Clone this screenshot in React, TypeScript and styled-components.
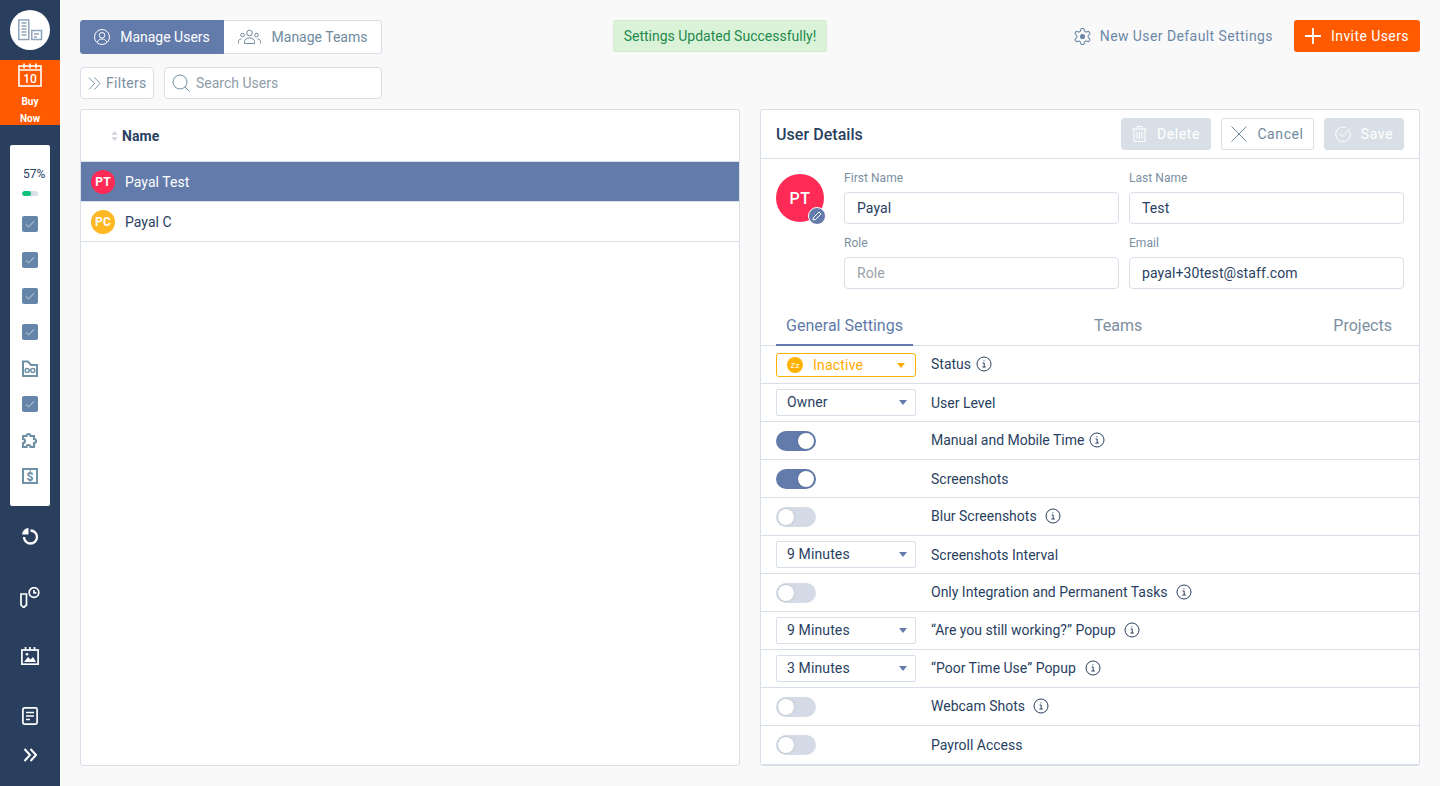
import React from "react";
import styled, { createGlobalStyle } from "styled-components";

const Global = createGlobalStyle`
  html, body { margin: 0; padding: 0; height: 100%; background: #f9f9fa; }
  * { box-sizing: border-box; }
  body { font-family: Roboto, "Liberation Sans", sans-serif; color: #2a3f5f; overflow: hidden; }
`;

const Page = styled.div`display: flex; width: 1440px; height: 786px; overflow: hidden;`;
const Sidebar = styled.aside`
  width: 60px; flex: none; height: 786px; background: #2a3f5e;
  display: flex; flex-direction: column; align-items: center; padding-top: 10px;
`;
const LogoCircle = styled.div`
  width: 40px; height: 40px; border-radius: 50%; background: #fff;
  display: flex; align-items: center; justify-content: center; flex: none;
`;
const BuyNow = styled.div`
  margin-top: 10px; width: 60px; height: 65px; background: #ff5a00; color: #fff; flex: none;
  display: flex; flex-direction: column; align-items: center; padding-top: 3px;
  font-size: 10px; font-weight: 700;
  span { display: block; line-height: 18px; height: 18px; margin-top: -1px; }
`;
const BuyIcon = styled.svg`width: 24px; height: 24px; margin-bottom: 7px; flex: none;`;
const ChecklistCard = styled.div`
  margin-top: 20px; width: 40px; height: 361px; background: #fff; border-radius: 2px; flex: none;
  display: flex; flex-direction: column; align-items: center; padding-top: 22px;
`;
const Percent = styled.div`
  font-size: 12px; line-height: 14px; color: #2a3f5f; width: 40px; padding-left: 13px; white-space: nowrap;
`;
const MiniBar = styled.div`
  margin-top: 10px; margin-bottom: 10px; width: 16px; height: 5px; border-radius: 3px; background: #d8dee8; overflow: hidden; flex: none;
`;
const MiniFill = styled.div`height: 100%; background: #0fc27a; border-radius: 3px;`;
const ChecklistSlot = styled.div`
  width: 16px; height: 36px; flex: none; display: flex; align-items: center; justify-content: center;
`;
const CheckBox = styled.div`
  width: 16px; height: 16px; border-radius: 2px; background: #6585a8;
  display: flex; align-items: center; justify-content: center;
`;
const SideIconSlot = styled.div<{ $top: number }>`
  margin-top: ${p => p.$top}px; width: 60px; flex: none; display: flex; justify-content: center;
`;

const Main = styled.main`flex: 1; min-width: 0; padding: 20px 20px 20px 20px; display: flex; flex-direction: column;`;
const TopRow = styled.div`display: flex; align-items: flex-start; height: 34px; position: relative;`;
const Segments = styled.div`display: flex; width: 302px; height: 34px; flex: none;`;
const Segment = styled.div<{ $active?: boolean; $w: number }>`
  width: ${p => p.$w}px; height: 34px; display: flex; align-items: center; justify-content: center; gap: ${p => (p.$active ? 10 : 11)}px;
  font-size: 14px;
  background: ${p => (p.$active ? "#627bab" : "#fff")};
  color: ${p => (p.$active ? "#fff" : "#6f8b9e")};
  border: 1px solid ${p => (p.$active ? "#627bab" : "#d9dfe9")};
  border-radius: ${p => (p.$active ? "3px 0 0 3px" : "0 3px 3px 0")};
  ${p => (p.$active ? "" : "border-left: none;")}
`;
const Toast = styled.div`
  margin-left: 231px; width: 214px; height: 32px; background: #daf3d8; border: 1px solid #cdeecb; border-radius: 3px;
  color: #1f8a4c; font-size: 14px; display: flex; align-items: center; justify-content: center;
`;
const TopRight = styled.div`margin-left: auto; display: flex; align-items: center; height: 32px;`;
const DefaultLink = styled.div`
  display: flex; align-items: center; gap: 9px; color: #6c88a6; font-size: 14px; letter-spacing: .42px; margin-right: 21px;
`;
const InviteBtn = styled.div`
  width: 126px; height: 32px; border-radius: 3px; background: #ff5a00; color: #fff; font-size: 14px; letter-spacing: .42px;
  display: flex; align-items: center; justify-content: center; gap: 10px;
`;
const FilterRow = styled.div`display: flex; gap: 10px; margin-top: 13px; height: 32px;`;
const FilterBtn = styled.div`
  width: 74px; height: 32px; background: #fff; border: 1px solid #d9dfe9; border-radius: 4px;
  display: flex; align-items: center; padding-left: 7px; gap: 5px; color: #7d919f; font-size: 14px; letter-spacing: .3px;
`;
const SearchBox = styled.div`
  width: 218px; height: 32px; background: #fff; border: 1px solid #d9dfe9; border-radius: 4px;
  display: flex; align-items: center; padding-left: 7px; gap: 6px; color: #909ca6; font-size: 14px;
`;
const Panels = styled.div`display: flex; gap: 20px; margin-top: 10px; height: 657px;`;
const ListPanel = styled.section`
  width: 660px; height: 657px; background: #fff; border: 1px solid #d9dfe9; border-radius: 3px; overflow: hidden;
`;
const ListHead = styled.div`
  height: 52px; display: flex; align-items: center; padding-left: 29px; gap: 3px; border-bottom: 1px solid #d9dfe9;
  font-size: 14px; font-weight: 700; color: #2a3f5f; letter-spacing: .1px;
`;
const UserRow = styled.div<{ $active?: boolean }>`
  height: 40px; display: flex; align-items: center; padding-left: 10px; gap: 10px; font-size: 14px; letter-spacing: .05px;
  background: ${p => (p.$active ? "#627bab" : "#fff")};
  color: ${p => (p.$active ? "#fff" : "#2a3f5f")};
  border-bottom: 1px solid #d9dfe9;
`;
const Avatar = styled.div<{ $bg: string }>`
  width: 24px; height: 24px; border-radius: 50%; background: ${p => p.$bg}; color: #fff;
  font-size: 12px; font-weight: 700; display: flex; align-items: center; justify-content: center; letter-spacing: .2px; flex: none;
`;
const DetailPanel = styled.section`
  width: 660px; height: 657px; background: #fff; border: 1px solid #d9dfe9; border-radius: 3px; overflow: hidden;
  display: flex; flex-direction: column;
`;
const DetailHead = styled.div`
  height: 49px; flex: none; display: flex; align-items: center; padding: 0 15px; border-bottom: 1px solid #d9dfe9;
`;
const DetailTitle = styled.div`font-size: 16px; font-weight: 500; color: #2a3f5f; margin-right: auto; letter-spacing: .05px;`;
const ActionBtn = styled.div<{ $w: number; $light?: boolean }>`
  width: ${p => p.$w}px; height: 32px; border-radius: 3px; margin-left: 10px;
  display: flex; align-items: center; justify-content: center; gap: 10px; font-size: 14px; letter-spacing: .6px;
  background: ${p => (p.$light ? "#fff" : "#d8dfe6")};
  border: 1px solid ${p => (p.$light ? "#d9dfe9" : "#d8dfe6")};
  color: ${p => (p.$light ? "#6f8b9e" : "#fff")};
`;
const FormArea = styled.div`display: flex; padding: 15px 15px 0 15px; flex: none;`;
const BigAvatarWrap = styled.div`width: 48px; height: 48px; position: relative; flex: none; margin-right: 20px;`;
const BigAvatar = styled.div`
  width: 48px; height: 48px; border-radius: 50%; background: #ff2a55; color: #fff; font-size: 16px; font-weight: 500;
  display: flex; align-items: center; justify-content: center; letter-spacing: .4px;
`;
const EditBadge = styled.div`
  position: absolute; right: -2px; bottom: -3px; width: 18px; height: 18px; border-radius: 50%; background: #627bab; border: 1px solid #fff;
  display: flex; align-items: center; justify-content: center;
`;
const FieldGrid = styled.div`display: grid; grid-template-columns: 275px 275px; column-gap: 10px; row-gap: 12px; margin-top: -3px;`;
const Field = styled.div`display: flex; flex-direction: column;`;
const FieldLabel = styled.div`font-size: 12px; line-height: 14px; height: 21px; color: #7b909f; letter-spacing: .05px;`;
const FieldInput = styled.div<{ $placeholder?: boolean }>`
  height: 32px; border: 1px solid #d9dfe9; border-radius: 4px; background: #fff; display: flex; align-items: center; padding-left: 12px;
  font-size: 14px; letter-spacing: .1px; color: ${p => (p.$placeholder ? "#9aa2aa" : "#2a3f5f")};
`;
const Tabs = styled.div`
  margin-top: 20px; height: 37px; flex: none; display: flex; align-items: stretch; justify-content: space-between;
  padding: 0 27px 0 15px; border-bottom: 1px solid #d9dfe9;
`;
const Tab = styled.div<{ $active?: boolean; $w?: number; $nudge?: boolean }>`
  width: ${p => (p.$w ? p.$w + "px" : "auto")}; text-align: center; font-size: 16px; line-height: 34px; margin-bottom: -1px;
  color: ${p => (p.$active ? "#627bab" : "#7c8fa1")};
  border-bottom: 2px solid ${p => (p.$active ? "#627bab" : "transparent")};
  ${p => (p.$nudge ? "margin-right: 10px;" : "")}
`;
const Rows = styled.div`flex: 1; min-height: 0;`;
const Row = styled.div<{ $h?: number }>`
  height: ${p => p.$h ?? 38}px; display: flex; align-items: center; padding-left: 15px; border-bottom: 1px solid #d9dfe9;
`;
const Control = styled.div`width: 155px; flex: none; display: flex; align-items: center;`;
const Select = styled.div`
  width: 140px; height: 27px; border: 1px solid #d9dfe9; border-radius: 2px; background: #fff; display: flex; align-items: center;
  padding: 0 8px 0 10px; font-size: 14px; letter-spacing: .12px; color: #2a3f5f; justify-content: space-between; margin-top: -1px;
`;
const Caret = styled.i<{ $c: string }>`
  width: 0; height: 0; border-left: 4px solid transparent; border-right: 4px solid transparent; border-top: 5px solid ${p => p.$c}; display: block; margin-top: 1px;
`;
const StatusSelect = styled.div`
  width: 140px; height: 24px; border: 1px solid #ffb300; border-radius: 3px; background: #fff; display: flex; align-items: center;
  padding: 0 10px; font-size: 14px; letter-spacing: .2px; color: #ffab00; margin-top: 1px;
`;
const Zz = styled.div`
  width: 16px; height: 16px; border-radius: 50%; background: #ffb300; color: #fff; font-size: 8px; display: flex; align-items: center; justify-content: center; margin-right: 10px; flex: none;
`;
const StatusText = styled.span`margin-right: auto;`;
const Toggle = styled.div<{ $on?: boolean }>`
  width: 40px; height: 20px; border-radius: 10px; background: ${p => (p.$on ? "#627bab" : "#d4dbe6")};
  padding: 2px; display: flex; justify-content: ${p => (p.$on ? "flex-end" : "flex-start")};
  &::after { content: ""; width: 16px; height: 16px; border-radius: 50%; background: #fff; box-shadow: 0 0 2px rgba(0,0,0,.2); }
`;
const RowLabel = styled.div<{ $low?: boolean; $gap?: number }>`
  font-size: 14px; color: #2a3f5f; display: flex; align-items: center; gap: ${p => p.$gap ?? 8}px; white-space: nowrap;
  margin-top: ${p => (p.$low ? "1px" : "-1px")};
`;

const Info = () => (
  <svg width="16" height="16" viewBox="0 0 16 16" fill="none" stroke="#2a3f5f" strokeWidth="1">
    <circle cx="8" cy="8" r="7" />
    <path d="M6.6 7h1.6v4M6.4 11h3.4" />
    <circle cx="8" cy="4.8" r=".6" fill="#2a3f5f" stroke="none" />
  </svg>
);
const Tick = () => (
  <svg width="10" height="8" viewBox="0 0 10 8" fill="none" stroke="#c9d6e2" strokeWidth="1"><path d="M1 4.5 3.6 7 9 1.2" /></svg>
);
const Check = () => <ChecklistSlot><CheckBox><Tick /></CheckBox></ChecklistSlot>;

export default function App() {
  return (
    <Page>
      <Global />
      <Sidebar>
        <LogoCircle>
          <svg width="40" height="40" viewBox="0 0 40 40" fill="none" stroke="#8ea4bd" strokeWidth="1.5">
            <path d="M8.8 10h10v19.500h-10zM21.800 20.500h9.700v9h-9.700z" />
            <path d="M11.500 13h5M11.500 16h5M11.500 19h5M11.500 22h5M11.500 25h5M24 24h5M24 27h3" />
          </svg>
        </LogoCircle>
        <BuyNow>
          <BuyIcon viewBox="0 0 24 24" fill="none" stroke="#fff" strokeWidth="1.6">
            <rect x="1" y="3" width="22" height="20" />
            <path d="M1 7h22M6 .5v5M12 .5v5M18 .5v5" />
            <text x="12" y="19.500" textAnchor="middle" fill="#fff" stroke="none" fontSize="12" fontFamily="Roboto" fontWeight="500">10</text>
          </BuyIcon>
          <span>Buy</span>
          <span>Now</span>
        </BuyNow>
        <ChecklistCard>
          <Percent>57%</Percent>
          <MiniBar><MiniFill style={{ width: "57%" }} /></MiniBar>
          <Check /><Check /><Check /><Check />
          <ChecklistSlot>
            <svg width="16" height="17" viewBox="0 0 16 17" fill="none" stroke="#6f90a5" strokeWidth="2">
              <path d="M1 16V1.500h5l3 3.500h6v11z" />
              <circle cx="5.200" cy="10.500" r="2" strokeWidth="1.500" /><circle cx="10.800" cy="10.500" r="2" strokeWidth="1.500" />
            </svg>
          </ChecklistSlot>
          <Check />
          <ChecklistSlot>
            <svg width="16" height="16" viewBox="0 0 16 16" fill="none" stroke="#6f90a5" strokeWidth="2.200">
              <path d="M1 4h3.500a2 2 0 1 1 4 0H12v3a2 2 0 1 1 0 4v4H8.500a2 2 0 0 0-4 0H1v-4a2 2 0 1 0 0-4z" />
            </svg>
          </ChecklistSlot>
          <ChecklistSlot>
            <svg width="16" height="16" viewBox="0 0 16 16" fill="none" stroke="#6f90a5" strokeWidth="2">
              <rect x="1" y="1" width="14" height="14" />
              <text x="8" y="12.500" textAnchor="middle" fontSize="12" fontWeight="900" fontFamily="Roboto" fill="#6f90a5" stroke="none">$</text>
            </svg>
          </ChecklistSlot>
        </ChecklistCard>
        <SideIconSlot $top={21}>
          <svg width="18" height="18" viewBox="0 0 18 18" fill="none" stroke="#fff" strokeWidth="2.300">
            <path d="M9.500 3.500a6.500 6.500 0 1 1-6.500 6.500" />
            <path d="M7.500 1v6.500H1A7 7 0 0 1 7.500 1z" fill="#fff" stroke="none" />
          </svg>
        </SideIconSlot>
        <SideIconSlot $top={42}>
          <svg width="20" height="21" viewBox="0 0 20 21" fill="none" stroke="#fff" strokeWidth="1.700">
            <path d="M1 7h5.500v11L3.700 20.500 1 18z" />
            <circle cx="14" cy="5.500" r="4.800" />
            <path d="M14 3V5.800h2.400" />
          </svg>
        </SideIconSlot>
        <SideIconSlot $top={39}>
          <svg width="18" height="18" viewBox="0 0 18 18" fill="none" stroke="#fff" strokeWidth="1.700">
            <rect x=".9" y="3" width="16.200" height="14.200" />
            <path d="M4.500 0v3.500M9 0v3.500M13.500 0v3.500" />
            <path d="M3 15l4-5 2.500 2.500L12 10l3 5z" fill="#fff" stroke="none" />
            <circle cx="6" cy="7.300" r="1.300" fill="#fff" stroke="none" />
          </svg>
        </SideIconSlot>
        <SideIconSlot $top={42}>
          <svg width="16" height="18" viewBox="0 0 16 18" fill="none" stroke="#fff" strokeWidth="1.700">
            <rect x=".9" y=".9" width="14.200" height="16.200" rx="1.500" />
            <path d="M4 5.500h8M4 9h8M4 12.500h4" />
          </svg>
        </SideIconSlot>
        <SideIconSlot $top={23}>
          <svg width="14" height="14" viewBox="0 0 14 14" fill="none" stroke="#fff" strokeWidth="2"><path d="M1.500 1 7 7l-5.500 6M7.500 1 13 7l-5.500 6" /></svg>
        </SideIconSlot>
      </Sidebar>
      <Main>
        <TopRow>
          <Segments>
            <Segment $active $w={144}>
              <svg width="16" height="16" viewBox="0 0 16 16" fill="none" stroke="#fff" strokeWidth="1"><circle cx="8" cy="8" r="7.500" /><circle cx="8" cy="6.300" r="2.800" /><path d="M3.300 13c1-2.200 2.800-3 4.700-3s3.700.8 4.700 3" /></svg>
              Manage Users
            </Segment>
            <Segment $w={158}>
              <svg width="23" height="16" viewBox="0 0 23 16" fill="none" stroke="#6f8b9e" strokeWidth="1">
                <circle cx="11.500" cy="4" r="2.800" /><circle cx="4.500" cy="6" r="1.800" /><circle cx="18.500" cy="6" r="1.800" />
                <path d="M6.500 14.500v-2c0-2 2-3.500 5-3.500s5 1.500 5 3.500v2zM.5 14.500v-2c0-1.500 1-2.500 3-2.500M22.500 14.500v-2c0-1.500-1-2.500-3-2.500" />
              </svg>
              Manage Teams
            </Segment>
          </Segments>
          <Toast>Settings Updated Successfully!</Toast>
          <TopRight>
            <DefaultLink>
              <svg width="17" height="17" viewBox="1.500 1.500 21 21" fill="none" stroke="#6c88a6" strokeWidth="1.300">
                <path d="M12.220 2h-.44a2 2 0 0 0-2 2v.18a2 2 0 0 1-1 1.730l-.43.250a2 2 0 0 1-2 0l-.15-.080a2 2 0 0 0-2.730.730l-.22.380a2 2 0 0 0 .730 2.730l.15.100a2 2 0 0 1 1 1.720v.510a2 2 0 0 1-1 1.740l-.15.090a2 2 0 0 0-.730 2.730l.22.380a2 2 0 0 0 2.730.730l.15-.080a2 2 0 0 1 2 0l.43.250a2 2 0 0 1 1 1.730V20a2 2 0 0 0 2 2h.44a2 2 0 0 0 2-2v-.18a2 2 0 0 1 1-1.730l.43-.250a2 2 0 0 1 2 0l.15.080a2 2 0 0 0 2.730-.730l.22-.390a2 2 0 0 0-.730-2.730l-.15-.080a2 2 0 0 1-1-1.740v-.5a2 2 0 0 1 1-1.740l.15-.090a2 2 0 0 0 .730-2.730l-.22-.380a2 2 0 0 0-2.730-.730l-.15.080a2 2 0 0 1-2 0l-.43-.250a2 2 0 0 1-1-1.730V4a2 2 0 0 0-2-2z" />
                <circle cx="12" cy="12" r="2.500" fill="#6c88a6" />
              </svg>
              New User Default Settings
            </DefaultLink>
            <InviteBtn>
              <svg width="16" height="16" viewBox="0 0 16 16" stroke="#fff" strokeWidth="1.800"><path d="M8 0v16M0 8h16" /></svg>
              Invite Users
            </InviteBtn>
          </TopRight>
        </TopRow>
        <FilterRow>
          <FilterBtn>
            <svg width="13" height="13" viewBox="0 0 13 13" fill="none" stroke="#7d98a8" strokeWidth="1"><path d="M1 .500 6.500 6.500 1 12.500M6.500 .500 12 6.500l-5.500 6" /></svg>
            Filters
          </FilterBtn>
          <SearchBox>
            <svg width="18" height="18" viewBox="0 0 18 18" fill="none" stroke="#6f90a5" strokeWidth="1"><circle cx="8" cy="8" r="7" /><path d="M13 13l4.500 4.500" /></svg>
            Search Users
          </SearchBox>
        </FilterRow>
        <Panels>
          <ListPanel>
            <ListHead>
              <svg width="9" height="10" viewBox="0 0 8 9" fill="#d0d6df"><path d="M4 0l3 3.500H1zM4 9 1 5.500h6z" /></svg>
              Name
            </ListHead>
            <UserRow $active><Avatar $bg="#ff2a55">PT</Avatar>Payal Test</UserRow>
            <UserRow><Avatar $bg="#ffb722">PC</Avatar>Payal C</UserRow>
          </ListPanel>
          <DetailPanel>
            <DetailHead>
              <DetailTitle>User Details</DetailTitle>
              <ActionBtn $w={90}>
                <svg width="15" height="16" viewBox="0 0 15 16" fill="none" stroke="#fff" strokeWidth="1"><path d="M0 3h15M5 3V.500h5V3M2 3v12.500h11V3M5 6v7M7.500 6v7M10 6v7" /></svg>
                Delete
              </ActionBtn>
              <ActionBtn $w={93} $light>
                <svg width="16" height="16" viewBox="0 0 16 16" fill="none" stroke="#6f8b9e" strokeWidth="1"><path d="M.5.500l15 15M15.500.500l-15 15" /></svg>
                Cancel
              </ActionBtn>
              <ActionBtn $w={80}>
                <svg width="16" height="16" viewBox="0 0 16 16" fill="none" stroke="#fff" strokeWidth="1"><path d="M14.500 5A7.300 7.300 0 1 1 11 1.700" /><path d="M4.500 7.500l3 3L15 2.500" /></svg>
                Save
              </ActionBtn>
            </DetailHead>
            <FormArea>
              <BigAvatarWrap>
                <BigAvatar>PT</BigAvatar>
                <EditBadge>
                  <svg width="10" height="10" viewBox="0 0 10 10" fill="none" stroke="#fff" strokeWidth="1"><path d="M1 9l.5-2.500L7 1l2 2-5.500 5.500z" /></svg>
                </EditBadge>
              </BigAvatarWrap>
              <FieldGrid>
                <Field><FieldLabel>First Name</FieldLabel><FieldInput>Payal</FieldInput></Field>
                <Field><FieldLabel>Last Name</FieldLabel><FieldInput>Test</FieldInput></Field>
                <Field><FieldLabel>Role</FieldLabel><FieldInput $placeholder>Role</FieldInput></Field>
                <Field><FieldLabel>Email</FieldLabel><FieldInput>payal+30test@staff.com</FieldInput></Field>
              </FieldGrid>
            </FormArea>
            <Tabs>
              <Tab $active $w={137}>General Settings</Tab>
              <Tab $nudge>Teams</Tab>
              <Tab>Projects</Tab>
            </Tabs>
            <Rows>
              <Row>
                <Control>
                  <StatusSelect><Zz>Zz</Zz><StatusText>Inactive</StatusText><Caret $c="#ffab00" /></StatusSelect>
                </Control>
                <RowLabel $gap={5}>Status <Info /></RowLabel>
              </Row>
              <Row><Control><Select>Owner<Caret $c="#627bab" /></Select></Control><RowLabel $low>User Level</RowLabel></Row>
              <Row><Control><Toggle $on /></Control><RowLabel $gap={5}>Manual and Mobile Time <Info /></RowLabel></Row>
              <Row><Control><Toggle $on /></Control><RowLabel $low>Screenshots</RowLabel></Row>
              <Row><Control><Toggle /></Control><RowLabel>Blur Screenshots <Info /></RowLabel></Row>
              <Row><Control><Select>9 Minutes<Caret $c="#627bab" /></Select></Control><RowLabel $low>Screenshots Interval</RowLabel></Row>
              <Row><Control><Toggle /></Control><RowLabel $gap={9}>Only Integration and Permanent Tasks <Info /></RowLabel></Row>
              <Row><Control><Select>9 Minutes<Caret $c="#627bab" /></Select></Control><RowLabel $gap={8}>“Are you still working?” Popup <Info /></RowLabel></Row>
              <Row><Control><Select>3 Minutes<Caret $c="#627bab" /></Select></Control><RowLabel $gap={9}>“Poor Time Use” Popup <Info /></RowLabel></Row>
              <Row><Control><Toggle /></Control><RowLabel>Webcam Shots <Info /></RowLabel></Row>
              <Row $h={39}><Control><Toggle /></Control><RowLabel>Payroll Access</RowLabel></Row>
            </Rows>
          </DetailPanel>
        </Panels>
      </Main>
    </Page>
  );
}
